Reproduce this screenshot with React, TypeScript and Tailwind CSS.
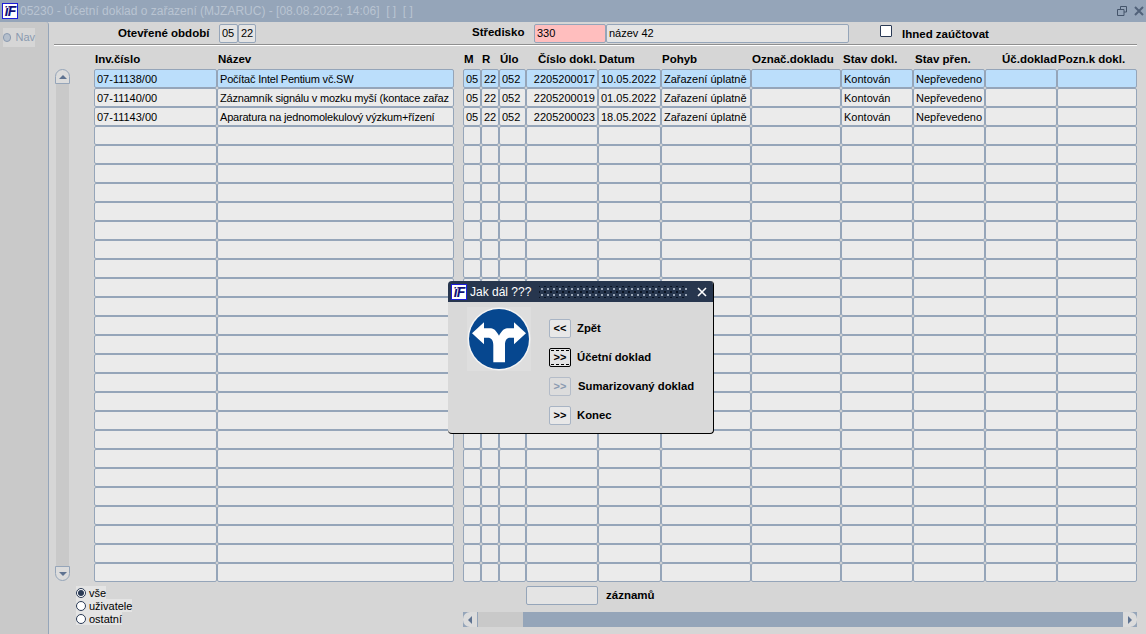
const cols = [123, 237, 9, 18, 18, 27, 72, 63, 90, 90, 72, 72, 72, 80];

const headers: [string, string][] = [
  ["Inv.číslo", ""],
  ["Název", ""],
  ["", ""],
  ["M", ""],
  ["R", ""],
  ["Úlo", ""],
  ["Číslo dokl.", "pl-[11px]"],
  ["Datum", ""],
  ["Pohyb", ""],
  ["Označ.dokladu", ""],
  ["Stav dokl.", "pl-[1px]"],
  ["Stav přen.", "pl-[1px]"],
  ["Úč.doklad", "pl-[16px]"],
  ["Pozn.k dokl.", ""],
];

const data = [
  ["07-11138/00", "Počítač Intel Pentium vč.SW", "05", "22", "052", "2205200017", "10.05.2022", "Zařazení úplatně", "", "Kontován", "Nepřevedeno", "", ""],
  ["07-11140/00", "Záznamník signálu v mozku myší (kontace zařaz", "05", "22", "052", "2205200019", "01.05.2022", "Zařazení úplatně", "", "Kontován", "Nepřevedeno", "", ""],
  ["07-11143/00", "Aparatura na jednomolekulový výzkum+řízení", "05", "22", "052", "2205200023", "18.05.2022", "Zařazení úplatně", "", "Kontován", "Nepřevedeno", "", ""],
];

const gridCols = cols.map((c) => c + "px").join(" ");

function Logo() {
  return (
    <div className="w-[16px] h-[16px] bg-white border border-[#1c1cd8] flex items-center justify-center overflow-hidden shrink-0">
      <span className="text-[14px] leading-none font-bold italic tracking-[-1px] text-[#10107a]">ïF</span>
    </div>
  );
}

function Row({ cells, active }: { cells: string[]; active: boolean }) {
  const bg = active ? "bg-[#bbdefb]" : "bg-[#ebebeb]";
  const out: React.ReactNode[] = [];
  cells.forEach((t, i) => {
    if (i === 2) out.push(<div key="gap" />);
    out.push(
      <div
        key={i}
        className={`h-[19px] border border-[#95a5b9] rounded-[2px] ${bg} px-[2px] text-[11px] leading-[18px] text-black whitespace-nowrap overflow-hidden ${i === 5 ? "text-right" : ""} ${i === 1 ? "tracking-[-0.2px]" : ""}`}
      >
        {t}
      </div>
    );
  });
  return (
    <div className="grid" style={{ gridTemplateColumns: gridCols }}>
      {out}
    </div>
  );
}

function Radio({ label, on }: { label: string; on?: boolean }) {
  return (
    <div className="flex items-center h-[13px] bg-[#e4e4e4] w-fit">
      <span className="w-[10px] h-[10px] rounded-full border border-[#2a3a55] bg-white flex items-center justify-center">
        {on && <span className="w-[6px] h-[6px] rounded-full bg-[#2a3a55]" />}
      </span>
      <span className="ml-[3px] pt-[1px] text-[11px] leading-[12px] text-black">{label}</span>
    </div>
  );
}

function DlgButton({ label, text, focus, disabled, shift }: { label: string; text: string; focus?: boolean; disabled?: boolean; shift?: boolean }) {
  return (
    <div className="flex items-center h-[29px]">
      <div className={`w-[22px] h-[19px] flex items-center justify-center text-[11px] font-bold rounded-[2px] ${focus ? "border border-black bg-[#e4e4e4]" : disabled ? "border border-[#b4bcc8] bg-[#dcdcdc]" : "border border-[#a8b4c4] bg-[#e8e8e8]"} ${disabled ? "text-[#8a9ab0]" : "text-black"}`}>
        {focus ? <span className="w-[18px] h-[15px] border-y border-dashed border-black flex items-center justify-center">{label}</span> : label}
      </div>
      <span className={`${shift ? "ml-[7px]" : "ml-[6px]"} text-[11.3px] font-bold text-black`}>{text}</span>
    </div>
  );
}

function Sign() {
  return (
    <svg width="64" height="64" viewBox="0 0 64 64">
      <rect width="64" height="64" fill="#dedede" />
      <circle cx="32" cy="32" r="31.5" fill="#f4f4f4" />
      <circle cx="32" cy="32" r="30" fill="#06478f" />
      <path
        d="M5 26.300L17 15.300V21.300H24C27 21.300 30 25 32 28.700C34 25 37 21.300 40 21.300H47V15.300L59 26.300L47 37.300V30.700H43C40 30.700 38 33 38 38V55.300H26.300V38C26.300 33 24 30.700 21 30.700H17V37.300Z"
        fill="#fff"
      />
    </svg>
  );
}

export default function App() {
  return (
    <div className="relative w-[1146px] h-[634px] overflow-hidden bg-[#d6d6d6] font-['Liberation_Sans',Arial,sans-serif]">
      <div className="h-[22px] bg-[#95a5b9] flex items-center pl-[2px]">
        <Logo />
        <span className="ml-[2px] text-[12px] text-[#b9c4d2]">05230 - Účetní doklad o zařazení (MJZARUC) - [08.08.2022; 14:06]&nbsp; [ ]&nbsp; [ ]</span>
        <div className="ml-auto flex items-center gap-[7px] pr-[2px]">
          <svg width="10" height="10" viewBox="0 0 10 10" fill="none" stroke="#44546a" strokeWidth="1">
            <path d="M3.500 3V.5h6v5.500H7M.5 3.500h6.500v6H.5z" />
          </svg>
          <svg width="10" height="10" viewBox="0 0 10 10" fill="none" stroke="#51627a" strokeWidth="2">
            <path d="M1 1l8 8M9 1l-8 8" />
          </svg>
        </div>
      </div>

      <div className="flex h-[612px]">
        <div className="w-[49px] bg-[#c9c9c9] border-r border-[#95a5b9] rounded-tr-[3px] pt-[6px]">
          <div className="h-[19px] w-[32px] ml-[3px] bg-[#d6d6d6] flex items-center">
            <span className="w-[9px] h-[9px] rounded-full border border-[#8a9ab0] bg-[#b5bfcc]" />
            <span className="ml-[4px] text-[11px] text-[#8a9ab0]">Nav</span>
          </div>
        </div>

        <div className="w-[1097px] pl-[5px] pr-[9px] flex flex-col">
          <div className="h-[22px] flex items-center">
            <span className="ml-[64px] w-[93px] pt-[1px] text-[11.5px] font-bold text-black whitespace-nowrap">Otevřené období</span>
            <span className="ml-[8px] w-[19px] h-[19px] border border-[#95a5b9] rounded-[2px] bg-[#e4e4e4] text-[11px] leading-[17px] pl-[2px] text-black">05</span>
            <span className="w-[18px] h-[19px] border border-[#95a5b9] rounded-[2px] bg-[#e4e4e4] text-[11px] leading-[17px] pl-[2px] text-black">22</span>
            <span className="ml-[216px] w-[54px] text-[11.5px] font-bold text-black">Středisko</span>
            <span className="ml-[8px] w-[72px] h-[19px] border border-[#95a5b9] rounded-[2px] bg-[#ffbebe] text-[11px] leading-[17px] pl-[2px] text-black">330</span>
            <span className="w-[243px] h-[19px] border border-[#95a5b9] rounded-[2px] bg-[#e4e4e4] text-[11px] leading-[17px] pl-[2px] text-black">název 42</span>
            <span className="ml-[31px] w-[12px] h-[12px] mb-[5px] border border-[#2a3a55] rounded-[1px] bg-white" />
            <span className="ml-[10px] mt-[3px] text-[11.5px] font-bold text-black">Ihned zaúčtovat</span>
          </div>
          <div className="h-[1px] bg-[#8f8f8f] border-b border-white box-content" />

          <div className="h-[23px] pt-[5px] pl-[41px]">
            <div className="grid items-center" style={{ gridTemplateColumns: gridCols }}>
              {headers.map(([h, cls], i) => (
                <span key={i} className={`text-[11.5px] font-bold text-black whitespace-nowrap ${cls}`}>{h}</span>
              ))}
            </div>
          </div>

          <div className="flex">
            <div className="w-[41px] flex flex-col pl-[1px]">
              <div className="w-[15px] h-[15px] rounded-t-[8px] border border-[#95a5b9] bg-[#dcdcdc] flex items-center justify-center">
                <span className="w-0 h-0 border-x-[4px] border-x-transparent border-b-[4px] border-b-[#5f7391]" />
              </div>
              <div className="w-[13px] ml-[1px] h-[482px] bg-[#c9c9c9]" />
              <div className="w-[15px] h-[15px] rounded-b-[8px] border border-[#95a5b9] bg-[#dcdcdc] flex items-center justify-center">
                <span className="w-0 h-0 border-x-[4px] border-x-transparent border-t-[4px] border-t-[#5f7391]" />
              </div>
            </div>
            <div>
              {Array.from({ length: 27 }).map((_, r) => (
                <Row key={r} active={r === 0} cells={data[r] ?? Array(13).fill("")} />
              ))}
            </div>
          </div>

          <div className="flex mt-[4px]">
            <div className="w-[387px] ml-[22px]">
              <Radio label="vše" on />
              <Radio label="uživatele" />
              <Radio label="ostatní" />
            </div>
            <div className="flex flex-col">
              <div className="flex items-center ml-[63px]">
                <div className="w-[72px] h-[19px] border border-[#95a5b9] rounded-[2px] bg-[#e4e4e4]" />
                <span className="ml-[8px] pt-[1px] text-[11.5px] font-bold text-black">záznamů</span>
              </div>
              <div className="mt-[7px] w-[674px] h-[15px] bg-[#95a5b9] flex justify-between">
                <div className="flex">
                  <div className="w-[15px] h-[15px] rounded-l-[7px] bg-[#dcdcdc] flex items-center justify-center border-r border-[#95a5b9]">
                    <span className="w-0 h-0 border-y-[4px] border-y-transparent border-r-[4px] border-r-[#5f7391]" />
                  </div>
                  <div className="w-[45px] bg-[#c9c9c9]" />
                </div>
                <div className="w-[14px] h-[15px] rounded-r-[7px] bg-[#dcdcdc] flex items-center justify-center">
                  <span className="w-0 h-0 border-y-[4px] border-y-transparent border-l-[4px] border-l-[#5f7391]" />
                </div>
              </div>
            </div>
          </div>
        </div>
      </div>

      <div className="absolute left-[448px] top-[281px] w-[266px] h-[153px] bg-[#d9d9d9] rounded-[4px] border-r border-b border-black overflow-hidden">
        <div className="h-[21px] bg-[#27364e] flex items-center pl-[3px]">
          <Logo />
          <span className="ml-[3px] text-[12px] text-white">Jak dál ???</span>
          <div className="ml-[8px] w-[148px] h-[12px] bg-[radial-gradient(#9aa5b5_0.9px,transparent_1.1px),radial-gradient(#0a1322_0.9px,transparent_1.1px)] bg-[length:6px_6px] bg-[position:0_0,3px_3px]" />
          <svg className="ml-[10px]" width="10" height="10" viewBox="0 0 10 10" fill="none" stroke="#fff" strokeWidth="1.6">
            <path d="M1 1l8 8M9 1l-8 8" />
          </svg>
        </div>
        <div className="flex">
          <div className="ml-[19px] mt-[5px]">
            <Sign />
          </div>
          <div className="ml-[18px] mt-[12px]">
            <DlgButton label="<<" text="Zpět" />
            <DlgButton label=">>" text="Účetní doklad" focus />
            <DlgButton label=">>" text="Sumarizovaný doklad" disabled shift />
            <DlgButton label=">>" text="Konec" />
          </div>
        </div>
      </div>
    </div>
  );
}
